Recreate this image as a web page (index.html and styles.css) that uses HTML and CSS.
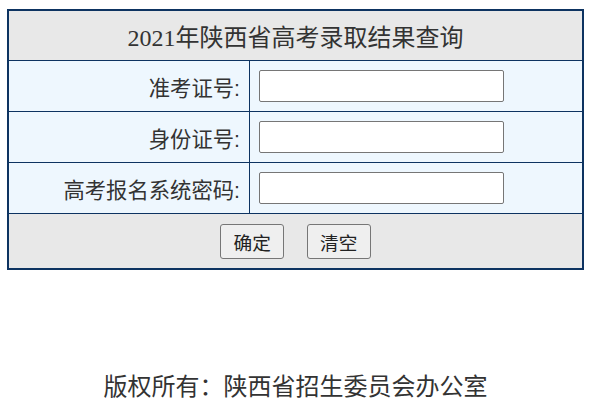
FILE: index.html
```html
<!DOCTYPE html>
<html lang="zh-CN">
<head>
  <meta charset="UTF-8" />
  <title>2021年陕西省高考录取结果查询</title>
  <link rel="stylesheet" href="styles.css">
</head>
<body>
  <form class="query-form" onsubmit="event.preventDefault();">
    <table class="query-table">
      <tr>
        <th colspan="2" class="title">2021年陕西省高考录取结果查询</th>
      </tr>
      <tr>
        <td class="label">准考证号:</td>
        <td class="field"><input type="text" name="ksh" /></td>
      </tr>
      <tr>
        <td class="label">身份证号:</td>
        <td class="field"><input type="text" name="sfzh" /></td>
      </tr>
      <tr>
        <td class="label">高考报名系统密码:</td>
        <td class="field"><input type="password" name="mm" /></td>
      </tr>
      <tr>
        <td colspan="2" class="actions">
          <button type="submit">确定</button>
          <button type="reset">清空</button>
        </td>
      </tr>
    </table>
  </form>

  <p class="footer">版权所有：陕西省招生委员会办公室</p>
</body>
</html>
```

FILE: styles.css
```css
body {
  margin: 0;
  padding: 9px 0 0 7px;
  font-family: "Liberation Sans", "Noto Sans CJK SC", sans-serif;
  color: #333;
  background: #fff;
}

.query-table {
  width: 577px;
  border-collapse: collapse;
  border: 2px solid #0d3361;
}

.query-table td,
.query-table th {
  border: 1px solid #0d3361;
  padding: 0;
}

.title {
  height: 49px;
  background: #e8e8e8;
  font-family: "Liberation Serif", "Noto Sans CJK SC", serif;
  font-size: 24px;
  font-weight: normal;
  text-align: center;
}

.label {
  width: 231px;
  height: 50px;
  padding-right: 9px !important;
  background: #eef7fe;
  font-size: 21.33px;
  text-align: right;
}

.field {
  background: #eef7fe;
  padding-left: 9px !important;
}

.field input {
  box-sizing: border-box;
  width: 245px;
  height: 32px;
  border: 1px solid #767676;
  border-radius: 2px;
  display: block;
  font-size: 16px;
}

.actions {
  height: 54px;
  background: #e8e8e8;
  text-align: center;
}

.actions button {
  box-sizing: border-box;
  width: 64px;
  height: 35px;
  margin: 0 9px;
  border: 1px solid #767676;
  border-radius: 3px;
  background: #efefef;
  color: #222;
  font-family: "Noto Sans CJK SC", sans-serif;
  font-size: 18.67px;
  cursor: pointer;
}

.footer {
  margin: 97px 0 0;
  width: 577px;
  text-align: center;
  font-size: 24px;
  color: #333;
}
```
